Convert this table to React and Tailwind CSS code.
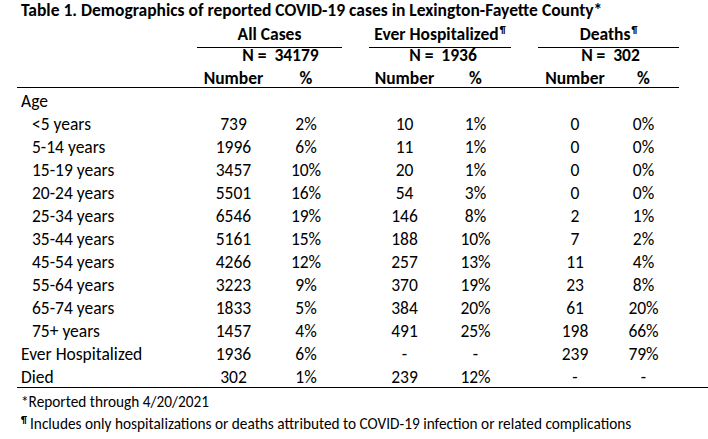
import React from 'react';

const rows = [
  { label: '<5 years', v: ['739', '2%', '10', '1%', '0', '0%'], indent: true },
  { label: '5-14 years', v: ['1996', '6%', '11', '1%', '0', '0%'], indent: true },
  { label: '15-19 years', v: ['3457', '10%', '20', '1%', '0', '0%'], indent: true },
  { label: '20-24 years', v: ['5501', '16%', '54', '3%', '0', '0%'], indent: true },
  { label: '25-34 years', v: ['6546', '19%', '146', '8%', '2', '1%'], indent: true },
  { label: '35-44 years', v: ['5161', '15%', '188', '10%', '7', '2%'], indent: true },
  { label: '45-54 years', v: ['4266', '12%', '257', '13%', '11', '4%'], indent: true },
  { label: '55-64 years', v: ['3223', '9%', '370', '19%', '23', '8%'], indent: true },
  { label: '65-74 years', v: ['1833', '5%', '384', '20%', '61', '20%'], indent: true },
  { label: '75+ years', v: ['1457', '4%', '491', '25%', '198', '66%'], indent: true },
  { label: 'Ever Hospitalized', v: ['1936', '6%', '-', '-', '239', '79%'] },
  { label: 'Died', v: ['302', '1%', '239', '12%', '-', '-'] },
];

const grid = 'grid grid-cols-[180px_73px_72px_27px_71px_71px_27px_70px_71px]';

const Cell = ({ children, className = '' }) => (
  <div className={`flex items-center justify-center whitespace-pre ${className}`}>{children}</div>
);

const Pil = () => <sup className="text-[10px] font-bold relative -top-[4px] ml-px">¶</sup>;

export default function App() {
  return (
    <div className="w-[708px] h-[439px] bg-white text-black font-['Carlito','Lato','Liberation_Sans',sans-serif] text-[17.5px] overflow-hidden">
      <div className="h-[21px] pl-[21px] flex items-center font-bold text-[17.5px] whitespace-nowrap">
        Table 1. Demographics of reported COVID-19 cases in Lexington-Fayette County*
      </div>

      <div className="ml-[17px] w-[662px]">
        <div className={`${grid} h-[21px] font-bold`}>
          <div />
          <Cell className="col-span-2 border-b border-black">All Cases</Cell>
          <div />
          <Cell className="col-span-2 border-b border-black">Ever Hospitalized<Pil /></Cell>
          <div />
          <Cell className="col-span-2 border-b border-black">Deaths<Pil /></Cell>
        </div>
        <div className={`${grid} h-[23px] font-bold`}>
          <div />
          <Cell className="col-span-2 pl-[22px]">N =  34179</Cell>
          <div />
          <Cell className="col-span-2 pl-[6px]">N =  1936</Cell>
          <div />
          <Cell className="col-span-2 pl-[4px]">N =  302</Cell>
        </div>
        <div className={`${grid} h-[22px] font-bold`}>
          <div />
          <Cell>Number</Cell>
          <Cell>%</Cell>
          <div />
          <Cell>Number</Cell>
          <Cell>%</Cell>
          <div />
          <Cell className="pl-[4px]">Number</Cell>
          <Cell>%</Cell>
        </div>
        <div className="h-px bg-black" />

        <div className={`${grid} h-[23px]`}>
          <div className="flex items-center pl-[4px]">Age</div>
        </div>
        {rows.map((r) => (
          <div key={r.label} className={`${grid} h-[23px]`}>
            <div className={`flex items-center whitespace-nowrap ${r.indent ? 'pl-[15px]' : 'pl-[4px]'}`}>{r.label}</div>
            <Cell>{r.v[0]}</Cell>
            <Cell>{r.v[1]}</Cell>
            <div />
            <Cell>{r.v[2]}</Cell>
            <Cell>{r.v[3]}</Cell>
            <div />
            <Cell className="pl-[4px]">{r.v[4]}</Cell>
            <Cell>{r.v[5]}</Cell>
          </div>
        ))}
      </div>
      <div className="ml-[17px] h-px bg-black" />

      <div className="pl-[21px] pt-[3px] text-[15.3px] whitespace-nowrap">
        <div className="h-[22px] flex items-center">*Reported through 4/20/2021</div>
        <div className="h-[22px] flex items-center">
          <sup className="text-[10px] font-bold relative -top-[4px] mr-[3px]">¶</sup>Includes only hospitalizations or deaths attributed to COVID-19 infection or related complications
        </div>
      </div>
    </div>
  );
}
